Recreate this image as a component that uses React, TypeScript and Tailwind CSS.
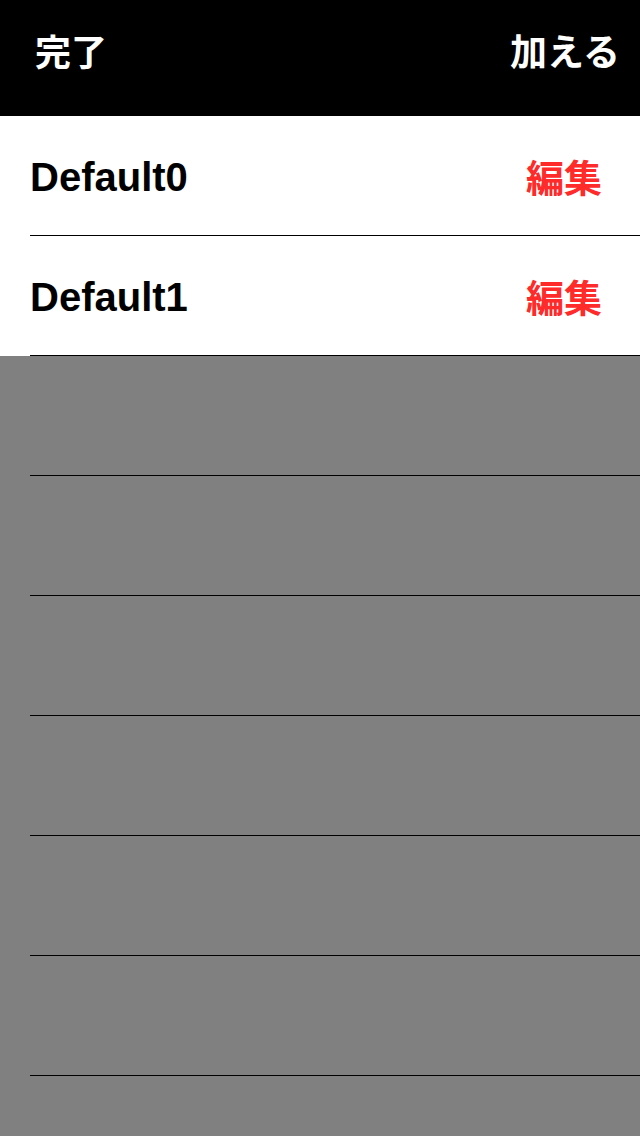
const rows = ["Default0", "Default1", "", "", "", "", "", "", ""];

const jp = "font-['Noto_Sans_CJK_JP',sans-serif]";

export default function App() {
  return (
    <div className="w-[640px] h-[1136px] overflow-hidden bg-[#808080]">
      <header className="h-[116px] bg-black">
        <div className={`h-[100px] flex items-center justify-between pl-[35px] pr-[20px] text-white text-[36px] font-bold leading-none ${jp}`}>
          <button>完了</button>
          <button className="text-[37px]">加える</button>
        </div>
      </header>

      <ul>
        {rows.map((name, i) => (
          <li
            key={i}
            className={`h-[120px] flex pl-[30px] ${name ? "bg-white" : "bg-[#808080]"}`}
          >
            <div className="flex-1 flex items-center justify-between border-b border-black pr-[38px]">
              {name && (
                <>
                  <span className="font-['Liberation_Sans',Arial,sans-serif] font-bold text-[40px] leading-none text-black pt-[3px]">
                    {name}
                  </span>
                  <span className={`${jp} font-bold text-[38px] leading-none text-[#ff2a2a]`}>
                    編集
                  </span>
                </>
              )}
            </div>
          </li>
        ))}
      </ul>
    </div>
  );
}
